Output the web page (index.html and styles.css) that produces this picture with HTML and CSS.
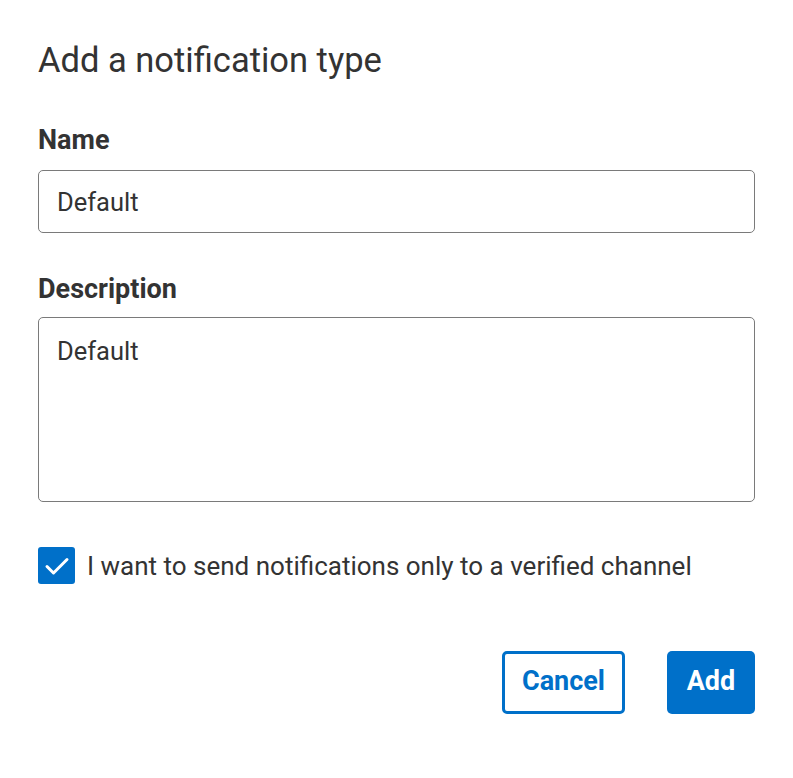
FILE: index.html
```html
<!DOCTYPE html>
<html>
<head>
<meta charset="utf-8">
<link rel="stylesheet" href="styles.css">
</head>
<body>
<div class="dialog">
  <h1 class="title">Add a notification type</h1>
  <label class="label">Name</label>
  <div class="input">Default</div>
  <label class="label label-desc">Description</label>
  <div class="textarea">Default</div>
  <div class="check-row">
    <span class="checkbox">
      <svg width="28" height="28" viewBox="0 0 28 28"><path d="M4 14.5l6.5 6.5L24 7.5" fill="none" stroke="#fff" stroke-width="3" stroke-linecap="round" stroke-linejoin="round"/></svg>
    </span>
    <span class="check-text">I want to send notifications only to a verified channel</span>
  </div>
  <div class="actions">
    <button class="btn btn-secondary">Cancel</button>
    <button class="btn btn-primary">Add</button>
  </div>
</div>
</body>
</html>
```
FILE: styles.css
```css
html, body { margin: 0; padding: 0; background: #fff; }
body { font-family: Roboto, "Noto Sans", sans-serif; color: #333; }
.dialog { padding: 38px 38px 0 38px; display: flex; flex-direction: column; }
.title { margin: 0; font-size: 34.5px; font-weight: 400; line-height: 44px; color: #333; }
.label { display: block; font-size: 27px; font-weight: 700; margin-top: 42px; line-height: 32px; color: #333; }
.label-desc { margin-top: 40px; }
.input { margin-top: 14px; border: 1.5px solid #7a7a7a; border-radius: 5px; box-sizing: border-box; height: 63px; padding: 0 18px; display: flex; align-items: center; font-size: 25.5px; color: #333; }
.textarea { margin-top: 12px; height: 185px; box-sizing: border-box; border: 1.5px solid #7a7a7a; border-radius: 5px; padding: 17px 18px; font-size: 25.5px; line-height: 32px; color: #333; }
.check-row { display: flex; align-items: center; margin-top: 45px; gap: 12px; }
.checkbox { width: 37px; height: 37px; border-radius: 3px; background: #0070c9; display: flex; align-items: center; justify-content: center; }
.check-text { font-size: 26px; color: #333; }
.actions { display: flex; justify-content: flex-end; gap: 42px; margin-top: 67px; }
.btn { height: 63px; border-radius: 5px; font-family: Roboto, sans-serif; font-weight: 700; font-size: 27px; line-height: 30px; box-sizing: border-box; cursor: pointer; padding: 0 0 4px 0; }
.btn-secondary { width: 123px; background: #fff; border: 3px solid #0070c9; color: #0070c9; }
.btn-primary { width: 88px; background: #0070c9; border: none; color: #fff; }
```
